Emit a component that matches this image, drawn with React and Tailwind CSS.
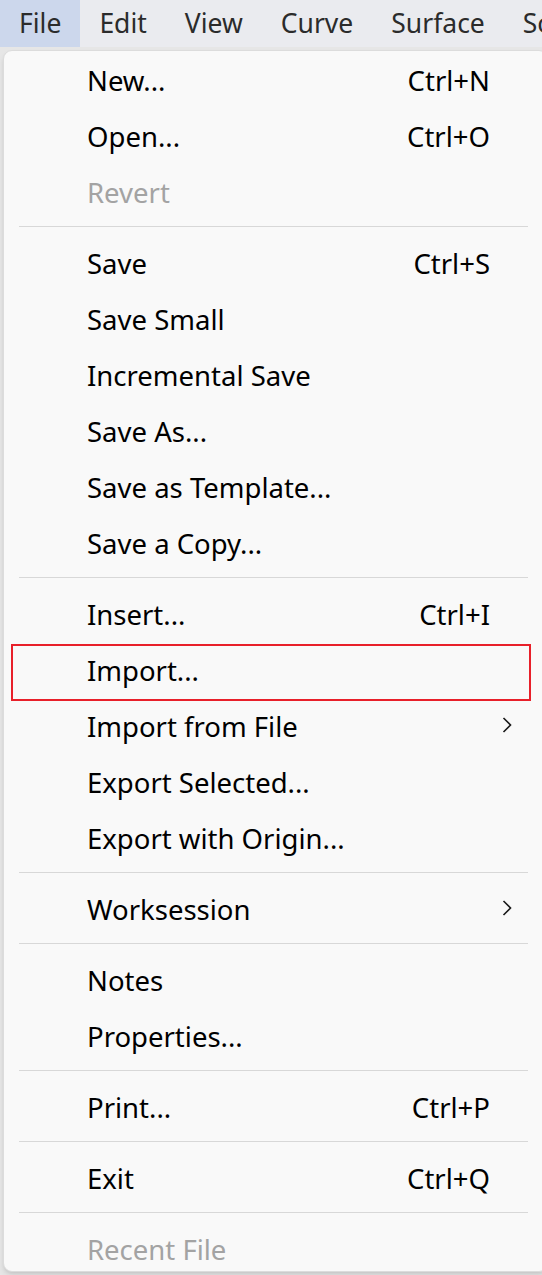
import React from 'react';

const menuBar = ['File', 'Edit', 'View', 'Curve', 'Surface', 'Solid'];

// null = separator
const fileItems = [
  { label: 'New...', shortcut: 'Ctrl+N' },
  { label: 'Open...', shortcut: 'Ctrl+O' },
  { label: 'Revert', disabled: true },
  null,
  { label: 'Save', shortcut: 'Ctrl+S' },
  { label: 'Save Small' },
  { label: 'Incremental Save' },
  { label: 'Save As...' },
  { label: 'Save as Template...' },
  { label: 'Save a Copy...' },
  null,
  { label: 'Insert...', shortcut: 'Ctrl+I' },
  { label: 'Import...', highlighted: true },
  { label: 'Import from File', submenu: true },
  { label: 'Export Selected...' },
  { label: 'Export with Origin...' },
  null,
  { label: 'Worksession', submenu: true },
  null,
  { label: 'Notes' },
  { label: 'Properties...' },
  null,
  { label: 'Print...', shortcut: 'Ctrl+P' },
  null,
  { label: 'Exit', shortcut: 'Ctrl+Q' },
  null,
  { label: 'Recent File', disabled: true },
];

const Chevron = () => (
  <svg width="10" height="16" viewBox="0 0 10 16" className="mb-1">
    <path d="M1.5 1 L8.5 8 L1.5 15" fill="none" stroke="#1a1a1a" strokeWidth="1.6" />
  </svg>
);

const MenuItem = ({ item }) => (
  <div
    className={`relative flex h-[56px] items-center pl-[83px] pr-[57px] ${
      item.disabled ? 'text-[#a3a3a3]' : 'text-black'
    }`}
  >
    {item.highlighted && (
      <div className="absolute left-[7px] right-[16px] top-[1px] bottom-[-2px] border-2 border-[#e8202a]" />
    )}
    <span className="flex-1">{item.label}</span>
    {item.shortcut && <span>{item.shortcut}</span>}
    {item.submenu && (
      <span className="absolute right-[35px] top-0 flex h-full items-center">
        <Chevron />
      </span>
    )}
  </div>
);

const App = () => {
  return (
    <div
      className="h-[1275px] w-[542px] overflow-hidden bg-[#e6e6e6] text-[27.5px]"
      style={{ fontFamily: '"Noto Sans", "Open Sans", sans-serif' }}
    >
      {/* Menu bar */}
      <div className="flex h-[47px] items-center whitespace-nowrap bg-[#eaebef] text-[26.5px] text-[#2b2b2b]">
        {menuBar.map((name, i) => (
          <div
            key={name}
            className={`flex h-full shrink-0 items-center px-[19px] ${i === 0 ? 'bg-[#ccd7ec]' : ''}`}
          >
            {name}
          </div>
        ))}
      </div>

      {/* Dropdown */}
      <div className="ml-[3px] mt-[3px] h-[1222px] w-[545px] rounded-[9px] border border-[#dcdcdc] bg-[#f9f9f9] pt-[2px] shadow-md">
        {fileItems.map((item, i) =>
          item ? (
            <MenuItem key={i} item={item} />
          ) : (
            <div key={i} className="pb-[9px] pt-[5px] pl-[15px] pr-[16px]">
              <div className="h-px w-[509px] bg-[#d8d8d8]" />
            </div>
          )
        )}
      </div>
    </div>
  );
};

export default App;
